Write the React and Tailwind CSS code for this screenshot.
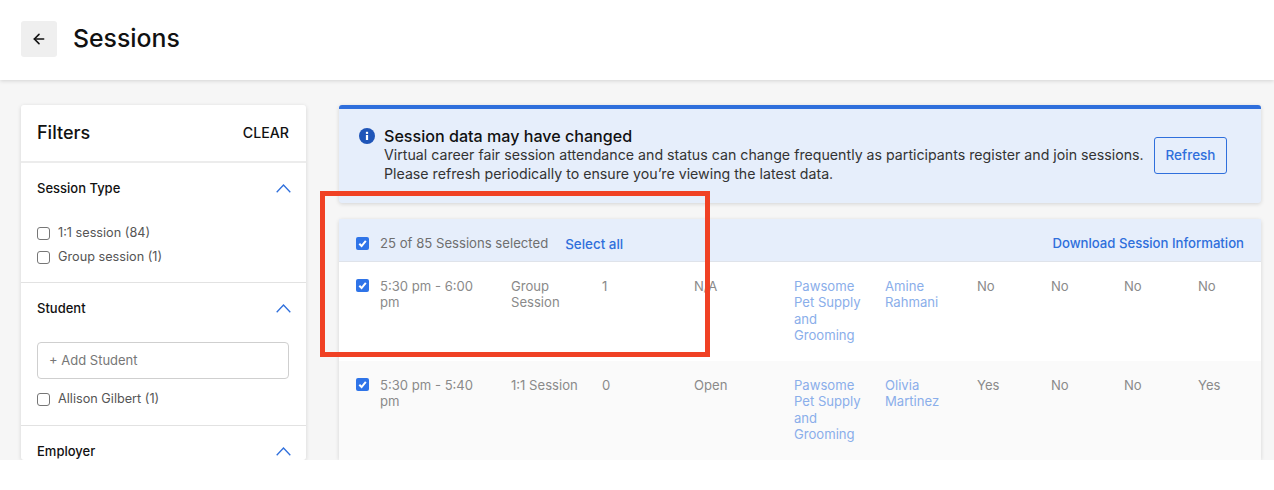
import React from 'react';
import { ArrowLeft } from 'lucide-react';

const sessionRows = [
  { time: '5:30 pm - 6:00 pm', type: 'Group Session', count: '1', status: 'N/A', employer: 'Pawsome Pet Supply and Grooming', student: 'Amine Rahmani', a: 'No', b: 'No', c: 'No', d: 'No', bg: 'bg-white' },
  { time: '5:30 pm - 5:40 pm', type: '1:1 Session', count: '0', status: 'Open', employer: 'Pawsome Pet Supply and Grooming', student: 'Olivia Martinez', a: 'Yes', b: 'No', c: 'No', d: 'Yes', bg: 'bg-[#fafafa]' },
];

const Checkbox = ({ checked }) =>
  checked ? (
    <span className="flex h-[13px] w-[13px] shrink-0 items-center justify-center rounded-[2px] bg-[#2f74e8]">
      <svg viewBox="0 0 12 12" className="h-[11px] w-[11px]" fill="none" stroke="white" strokeWidth="2.2">
        <path d="M2.5 6.3 L5 8.8 L9.6 3.2" />
      </svg>
    </span>
  ) : (
    <span className="h-[13px] w-[13px] shrink-0 rounded-[3px] border border-[#767676] bg-white" />
  );

const FilterHead = ({ title }) => (
  <div className="flex h-[18px] items-center justify-between">
    <span className="text-[13px] font-medium leading-4 text-[#111]">{title}</span>
    <svg viewBox="0 0 15 9" className="h-[9px] w-[15px] -mr-[1px]" fill="none" stroke="#2f6fdc" strokeWidth="1.3">
      <path d="M0.7 8.3 L7.5 1 L14.3 8.3" />
    </svg>
  </div>
);

const FilterOption = ({ label }) => (
  <div className="flex h-4 items-center gap-2 text-[12.7px] text-[#555]">
    <Checkbox />
    <span>{label}</span>
  </div>
);

const Row = ({ row }) => (
  <div className={`flex pb-[17.4px] pl-[17px] pt-4 text-[13.1px] leading-[16.4px] text-[#8a8a8a] ${row.bg}`}>
    <span className="mr-[11px] pt-[1px]"><Checkbox checked /></span>
    <div className="grid flex-1 grid-cols-[131px_91px_92px_100px_91px_92px_74px_73px_74px]">
      <div className="w-[100px]">{row.time}</div>
      <div className="w-[70px]">{row.type}</div>
      <div>{row.count}</div>
      <div>{row.status}</div>
      <div className="w-[72px] text-[#8aaeea]">{row.employer}</div>
      <div className="w-[70px] text-[#8aaeea]">{row.student}</div>
      <div>{row.a}</div>
      <div>{row.b}</div>
      <div>{row.c}</div>
    </div>
    <div className="w-[63px]">{row.d}</div>
  </div>
);

export default function App() {
  return (
    <div className="relative h-[490px] overflow-hidden bg-white font-['Inter',sans-serif]">
      <div className="h-[460px] overflow-hidden bg-[#f6f6f6]">
        <header className="relative flex h-20 items-center gap-4 bg-white pb-[3px] pl-[21px] shadow-[0_1px_4px_rgba(0,0,0,0.14)]">
          <button className="flex h-9 w-9 items-center justify-center rounded-[3px] bg-[#efefef]">
            <ArrowLeft className="h-4 w-4 text-[#111]" strokeWidth={2.4} />
          </button>
          <h1 className="text-[24.8px] font-medium text-[#111]">Sessions</h1>
        </header>

        <div className="flex gap-[33px] pl-[21px] pt-[25px]">
          <aside className="w-[285px] shrink-0 rounded-[3px] bg-white shadow-[0_1px_4px_rgba(0,0,0,0.14)]">
            <div className="flex h-[58px] items-center justify-between border-b-2 border-[#ececec] px-4 pb-[2px] pr-[17px]">
              <span className="text-[18px] font-medium text-[#111]">Filters</span>
              <span className="mt-[2px] text-[14.2px] font-medium text-[#111]">CLEAR</span>
            </div>
            <section className="border-b border-[#e2e2e2] px-4 pb-[17px] pt-4">
              <FilterHead title="Session Type" />
              <div className="mt-[28px] flex flex-col gap-2">
                <FilterOption label="1:1 session (84)" />
                <FilterOption label="Group session (1)" />
              </div>
            </section>
            <section className="border-b border-[#e2e2e2] px-4 pb-[18px] pt-4">
              <FilterHead title="Student" />
              <div className="mt-[25px] flex h-[37px] w-[252px] items-center rounded-[4px] border border-[#cfcfcf] px-[11px] text-[13px] text-[#777]">+ Add Student</div>
              <div className="mt-3"><FilterOption label="Allison Gilbert (1)" /></div>
            </section>
            <section className="px-4 pt-4">
              <FilterHead title="Employer" />
            </section>
          </aside>

          <main className="w-[922px] shrink-0">
            <div className="flex h-[98px] items-start justify-between rounded-[3px] border-t-4 border-[#2f6fdc] bg-[#e6eefb] pl-[20px] pr-[34px] pt-[17px] shadow-[0_1px_4px_rgba(0,0,0,0.14)]">
              <div className="flex gap-[9px]">
                <svg viewBox="0 0 16 16" className="mt-[2px] h-4 w-4 shrink-0">
                  <circle cx="8" cy="8" r="8" fill="#1f55b8" />
                  <rect x="6.9" y="7" width="2.2" height="5" fill="white" />
                  <rect x="6.9" y="3.8" width="2.2" height="2.1" fill="white" />
                </svg>
                <div>
                  <p className="text-[16.1px] font-medium leading-5 text-[#111]">Session data may have changed</p>
                  <p className="whitespace-nowrap text-[14.2px] leading-[18.5px] text-[#333]">
                    Virtual career fair session attendance and status can change frequently as participants register and join sessions.
                    <br />
                    Please refresh periodically to ensure you’re viewing the latest data.
                  </p>
                </div>
              </div>
              <button className="mt-[11px] flex h-[37px] w-[73px] shrink-0 items-center justify-center rounded-[3px] border border-[#2f6fdc] text-[13.5px] font-medium text-[#2f6fdc]">Refresh</button>
            </div>

            <div className="mt-4 rounded-[3px] shadow-[0_1px_4px_rgba(0,0,0,0.14)]">
              <div className="flex h-[43px] items-center justify-between border-b border-[#dfe3ea] bg-[#e6eefb] pl-[17px] pr-[17px] pt-2 text-[13.15px]">
                <div className="flex items-center">
                  <Checkbox checked />
                  <span className="ml-[11px] text-[#6f6f6f]">25 of 85 Sessions selected</span>
                  <span className="ml-[17px] text-[13.4px] font-medium text-[#2f6fdc]">Select all</span>
                </div>
                <span className="font-medium text-[#2f6fdc]">Download Session Information</span>
              </div>
              {sessionRows.map((row) => (
                <Row key={row.student} row={row} />
              ))}
            </div>
          </main>
        </div>
      </div>

      <div className="absolute left-[320px] top-[191px] h-[166px] w-[390px] border-[5px] border-[#f04124]" />
    </div>
  );
}
